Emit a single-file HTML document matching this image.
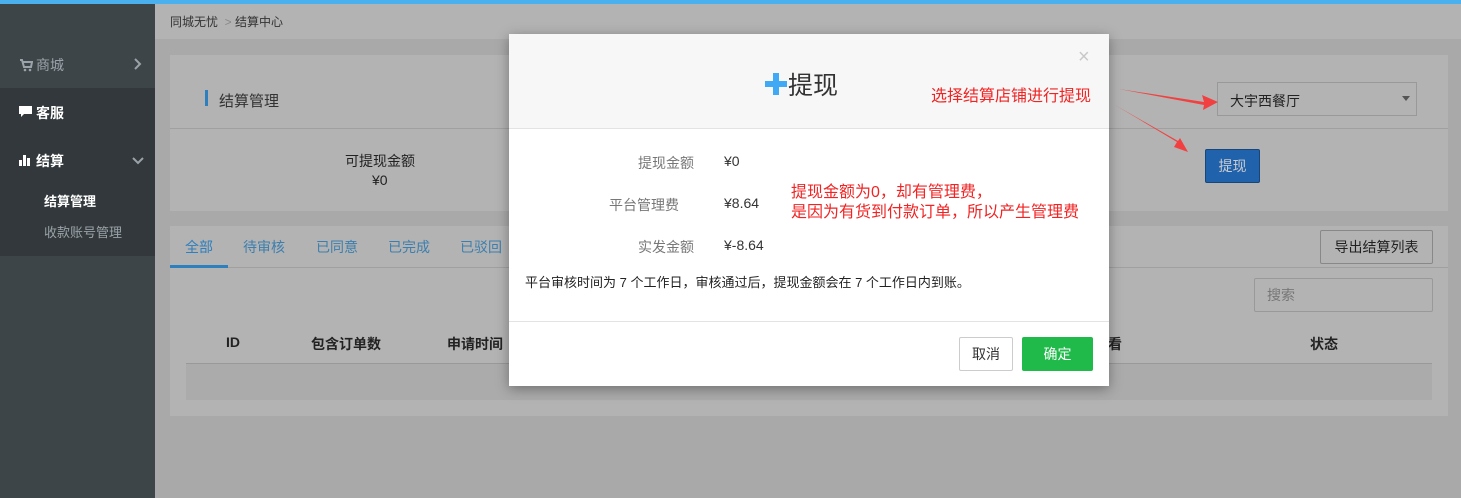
<!DOCTYPE html><html><head><meta charset="utf-8"><style>
*{margin:0;padding:0;box-sizing:border-box}
body{width:1461px;height:498px;overflow:hidden;background:#a9a9a9;font-family:"Liberation Sans","Noto Sans CJK SC",sans-serif;font-size:13px;color:#222;position:relative}
.a{position:absolute}
</style></head><body>
<div class="a" style="left:0;top:0;width:1461px;height:4px;background:#4ab0ee"></div>
<div class="a" style="left:0;top:4px;width:155px;height:494px;background:#3e4548"></div>
<div class="a" style="left:0;top:88px;width:155px;height:168px;background:#32383b"></div>
<svg class="a" style="left:19px;top:58px" width="14" height="14"><path d="M1 2h2l2 7h7l1-5H4" fill="none" stroke="#9aa3a9" stroke-width="2"/><circle cx="6" cy="12" r="1.3" fill="#9aa3a9"/><circle cx="11" cy="12" r="1.3" fill="#9aa3a9"/></svg>
<div class="a" style="left:36px;top:55px;color:#9aa3a9;font-size:14px">商城</div>
<svg class="a" style="left:134px;top:58px" width="8" height="12"><path d="M1 1l5 5-5 5" fill="none" stroke="#9aa3a9" stroke-width="2"/></svg>
<svg class="a" style="left:19px;top:106px" width="13" height="12"><path d="M0 0h13v8H5l-3 3V8H0z" fill="#fff"/></svg>
<div class="a" style="left:36px;top:103px;color:#fff;font-size:14px;font-weight:bold">客服</div>
<svg class="a" style="left:19px;top:154px" width="13" height="12"><rect x="0" y="6" width="3" height="6" fill="#fff"/><rect x="4" y="1" width="3" height="11" fill="#fff"/><rect x="8" y="4" width="3" height="8" fill="#fff"/></svg>
<div class="a" style="left:36px;top:151px;color:#fff;font-size:14px;font-weight:bold">结算</div>
<svg class="a" style="left:132px;top:157px" width="12" height="8"><path d="M1 1l5 5 5-5" fill="none" stroke="#9aa3a9" stroke-width="2"/></svg>
<div class="a" style="left:44px;top:191px;color:#fff;font-size:13px;font-weight:bold">结算管理</div>
<div class="a" style="left:44px;top:222px;color:#9aa3a9;font-size:13px">收款账号管理</div>
<div class="a" style="left:155px;top:4px;width:1306px;height:35px;background:#b3b3b3"></div>
<div class="a" style="left:170px;top:13px;font-size:12px;color:#333">同城无忧 <span style="color:#888">&nbsp;&gt;&nbsp;</span>结算中心</div>
<div class="a" style="left:170px;top:55px;width:1278px;height:156px;background:#b3b3b3"></div>
<div class="a" style="left:170px;top:128px;width:1278px;height:1px;background:#a0a0a0"></div>
<div class="a" style="left:205px;top:90px;width:3px;height:16px;background:#2e7fbd"></div>
<div class="a" style="left:219px;top:90px;font-size:15px;color:#333">结算管理</div>
<div class="a" style="left:345px;top:151px;font-size:14px;color:#222">可提现金额</div>
<div class="a" style="left:372px;top:172px;font-size:14px;color:#222">¥0</div>
<div class="a" style="left:1217px;top:82px;width:200px;height:34px;border:1px solid #999;background:#b3b3b3"></div>
<div class="a" style="left:1230px;top:91px;font-size:14px;color:#222">大宇西餐厅</div>
<div class="a" style="left:1402px;top:96px;width:0;height:0;border-left:4px solid transparent;border-right:4px solid transparent;border-top:5px solid #555"></div>
<div class="a" style="left:1205px;top:149px;width:55px;height:34px;background:#2062ac;border:1px solid #18457a;border-radius:2px;color:#ccc;font-size:14px;text-align:center;line-height:32px">提现</div>
<div class="a" style="left:170px;top:226px;width:1278px;height:190px;background:#b3b3b3"></div>
<div class="a" style="left:170px;top:267px;width:1278px;height:1px;background:#a0a0a0"></div>
<div class="a" style="left:170px;top:265px;width:58px;height:3px;background:#2e7fbd"></div>
<div class="a" style="left:185px;top:237px;font-size:14px;color:#2e7fbd">全部</div>
<div class="a" style="left:243px;top:237px;font-size:14px;color:#3c7fae">待审核</div>
<div class="a" style="left:316px;top:237px;font-size:14px;color:#3c7fae">已同意</div>
<div class="a" style="left:388px;top:237px;font-size:14px;color:#3c7fae">已完成</div>
<div class="a" style="left:460px;top:237px;font-size:14px;color:#3c7fae">已驳回</div>
<div class="a" style="left:1320px;top:230px;width:113px;height:34px;border:1px solid #888;border-radius:2px;font-size:14px;text-align:center;line-height:32px;color:#222">导出结算列表</div>
<div class="a" style="left:1254px;top:278px;width:179px;height:34px;border:1px solid #999;border-radius:2px;font-size:14px;line-height:32px;padding-left:12px;color:#777">搜索</div>
<div class="a" style="left:226px;top:334px;font-size:14px;font-weight:bold">ID</div>
<div class="a" style="left:311px;top:334px;font-size:14px;font-weight:bold">包含订单数</div>
<div class="a" style="left:447px;top:334px;font-size:14px;font-weight:bold">申请时间</div>
<div class="a" style="left:1108px;top:334px;font-size:14px;font-weight:bold">看</div>
<div class="a" style="left:1310px;top:334px;font-size:14px;font-weight:bold">状态</div>
<div class="a" style="left:186px;top:363px;width:1246px;height:1px;background:#999"></div>
<div class="a" style="left:186px;top:364px;width:1246px;height:36px;background:#ababab"></div>
<!-- modal -->
<div class="a" style="left:509px;top:34px;width:600px;height:352px;background:#fff;box-shadow:0 3px 12px rgba(0,0,0,.35)"></div>
<div class="a" style="left:509px;top:34px;width:600px;height:95px;background:#f7f7f7;border-bottom:1px solid #e3e3e3"></div>
<div class="a" style="left:1078px;top:46px;font-size:20px;color:#c8c8c8">×</div>
<svg class="a" style="left:765px;top:73px" width="22" height="22"><path d="M8 0h6v8h8v6h-8v8H8v-8H0V8h8z" fill="#3fa9f5"/></svg>
<div class="a" style="left:788px;top:66px;font-size:25px;color:#333">提现</div>
<div class="a" style="left:638px;top:153px;font-size:14px;color:#777">提现金额</div>
<div class="a" style="left:724px;top:153px;font-size:14px;color:#333">¥0</div>
<div class="a" style="left:609px;top:195px;font-size:14px;color:#777">平台管理费</div>
<div class="a" style="left:724px;top:195px;font-size:14px;color:#333">¥8.64</div>
<div class="a" style="left:638px;top:237px;font-size:14px;color:#777">实发金额</div>
<div class="a" style="left:724px;top:237px;font-size:14px;color:#333">¥-8.64</div>
<div class="a" style="left:525px;top:272px;font-size:13px;color:#222">平台审核时间为 7 个工作日，审核通过后，提现金额会在 7 个工作日内到账。</div>
<div class="a" style="left:509px;top:321px;width:600px;height:1px;background:#e3e3e3"></div>
<div class="a" style="left:959px;top:337px;width:54px;height:34px;border:1px solid #ccc;border-radius:2px;font-size:14px;text-align:center;line-height:32px;color:#333">取消</div>
<div class="a" style="left:1022px;top:337px;width:71px;height:34px;background:#1fba4a;border-radius:2px;font-size:14px;text-align:center;line-height:34px;color:#fff">确定</div>
<!-- annotations -->
<div class="a" style="left:931px;top:82px;font-size:16px;color:#f02424">选择结算店铺进行提现</div>
<div class="a" style="left:791px;top:183px;font-size:16px;color:#f02424;line-height:20px">提现金额为0，却有管理费，<br>是因为有货到付款订单，所以产生管理费</div>
<svg class="a" style="left:1100px;top:80px" width="130" height="80"><path d="M19 9L104 22 102 15 118 22 103 30 104 25z" fill="#f24040"/><path d="M15 25L77 62 74 67 88 72 80 58 78 61z" fill="#f24040"/></svg>
</body></html>
